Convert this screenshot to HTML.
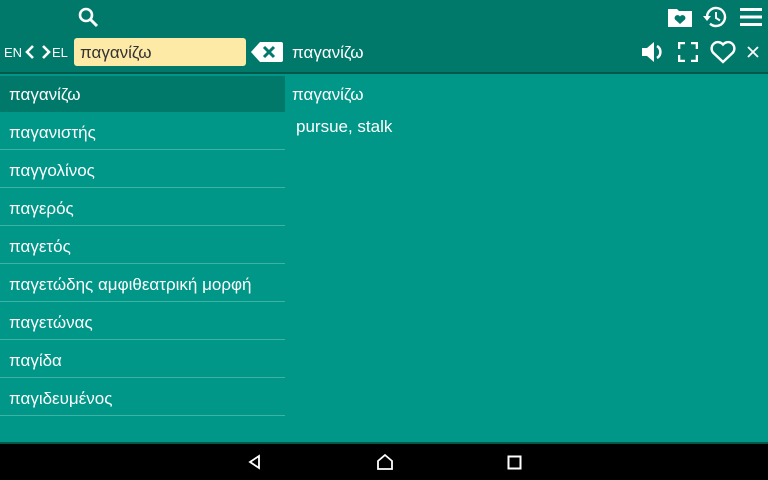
<!DOCTYPE html>
<html><head><meta charset="utf-8"><style>
*{margin:0;padding:0;box-sizing:border-box}
body{width:768px;height:480px;overflow:hidden;background:#009688;font-family:"Liberation Sans","DejaVu Sans",sans-serif;color:#fff;position:relative}
.hdr{position:absolute;left:0;top:0;width:768px;height:74px;background:#00796b;border-bottom:2px solid #00574b}
.abs{position:absolute}
.input{left:74px;top:38px;width:172px;height:28px;background:#fdeaa6;border-radius:3px;color:#333;font-size:17px;padding:5px 6px}
.row{position:absolute;left:0;width:285px;height:38px;font-size:17px;padding:11px 9px 0;border-bottom:1px solid #3cb3a5}
.sel{background:#00796b}
.nav{position:absolute;left:0;top:442px;width:768px;height:38px;background:#000;border-top:2px solid #00574b}
</style></head><body>
<div class="hdr"></div>
<svg class="abs" style="left:76px;top:5px" width="24" height="24" viewBox="0 0 24 24"><circle cx="10" cy="10" r="6" fill="none" stroke="#fff" stroke-width="2.6"/><path d="M14.5 14.5L21 21" stroke="#fff" stroke-width="3"/></svg>
<svg class="abs" style="left:667px;top:6px" width="26" height="22" viewBox="0 0 26 22"><path d="M1 3h9l2 2h13v16H1z" fill="#fff"/><path d="M13 18l-5-4.5a2.7 2.7 0 015-3a2.7 2.7 0 015 3z" fill="#00796b"/></svg>
<svg class="abs" style="left:702px;top:4px" width="26" height="26" viewBox="0 0 26 26"><path d="M5 13a9 9 0 1 1 3 6.7" fill="none" stroke="#fff" stroke-width="2.4"/><path d="M1 12l4 5 4-5z" fill="#fff"/><path d="M14 8v6l4 2.5" fill="none" stroke="#fff" stroke-width="2"/></svg>
<svg class="abs" style="left:739px;top:7px" width="24" height="20" viewBox="0 0 24 20"><path d="M1 2.5h22M1 10h22M1 17.5h22" stroke="#fff" stroke-width="3"/></svg>
<div class="abs" style="left:4px;top:45px;font-size:13px">EN</div>
<svg class="abs" style="left:24px;top:44px" width="28" height="16" viewBox="0 0 28 16"><path d="M9 2L3 8l6 6M19 2l6 6-6 6" fill="none" stroke="#fff" stroke-width="2.6"/></svg>
<div class="abs" style="left:52px;top:45px;font-size:13px">EL</div>
<div class="abs input">παγανίζω</div>
<svg class="abs" style="left:251px;top:41px" width="32" height="22" viewBox="0 0 32 22"><path d="M0 11L9 1h21a2 2 0 012 2v16a2 2 0 01-2 2H9z" fill="#fff"/><path d="M13 6l10 10M23 6L13 16" stroke="#00796b" stroke-width="3"/></svg>
<div class="abs" style="left:292px;top:43px;font-size:17px">παγανίζω</div>
<svg class="abs" style="left:641px;top:41px" width="24" height="22" viewBox="0 0 24 22"><path d="M1 7h5l7-6v20l-7-6H1z" fill="#fff"/><path d="M16 5a7 7 0 010 12" fill="none" stroke="#fff" stroke-width="2.5"/></svg>
<svg class="abs" style="left:678px;top:42px" width="20" height="20" viewBox="0 0 20 20"><path d="M1 7V1h6M13 1h6v6M19 13v6h-6M7 19H1v-6" fill="none" stroke="#fff" stroke-width="2.6"/></svg>
<svg class="abs" style="left:710px;top:40px" width="26" height="24" viewBox="0 0 26 24"><path d="M13 22L3 12.5A6 6 0 0113 4.5a6 6 0 0110 8z" fill="none" stroke="#fff" stroke-width="2.4"/></svg>
<svg class="abs" style="left:747px;top:46px" width="12" height="12" viewBox="0 0 12 12"><path d="M1 1l10 10M11 1L1 11" stroke="#fff" stroke-width="1.8"/></svg>

<div class="row sel" style="top:76px;height:36px;padding-top:9px;border-bottom:none">παγανίζω</div>
<div class="row" style="top:112px">παγανιστής</div>
<div class="row" style="top:150px">παγγολίνος</div>
<div class="row" style="top:188px">παγερός</div>
<div class="row" style="top:226px">παγετός</div>
<div class="row" style="top:264px">παγετώδης αμφιθεατρική μορφή</div>
<div class="row" style="top:302px">παγετώνας</div>
<div class="row" style="top:340px">παγίδα</div>
<div class="row" style="top:378px">παγιδευμένος</div>

<div class="abs" style="left:292px;top:85px;font-size:17px">παγανίζω</div>
<div class="abs" style="left:296px;top:117px;font-size:17px">pursue, stalk</div>

<div class="nav"></div>
<svg class="abs" style="left:247px;top:454px" width="16" height="16" viewBox="0 0 16 16"><path d="M12 2L3 8l9 6z" fill="none" stroke="#fff" stroke-width="1.8"/></svg>
<svg class="abs" style="left:376px;top:453px" width="18" height="18" viewBox="0 0 18 18"><path d="M2 8L9 2l7 6v8H2z" fill="none" stroke="#fff" stroke-width="1.8"/></svg>
<svg class="abs" style="left:507px;top:455px" width="15" height="15" viewBox="0 0 15 15"><rect x="1.5" y="1.5" width="12" height="12" fill="none" stroke="#fff" stroke-width="2"/></svg>
</body></html>
